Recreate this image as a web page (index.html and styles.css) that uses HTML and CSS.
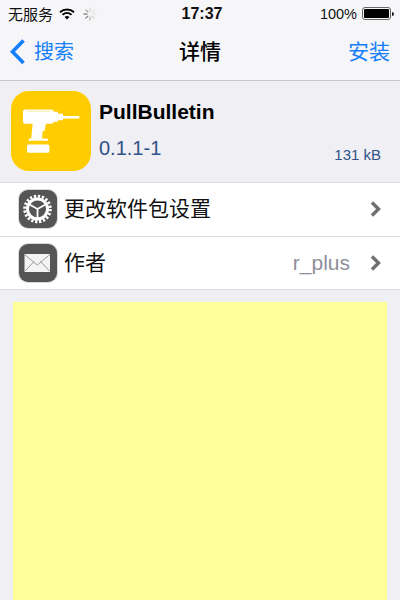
FILE: index.html
```html
<!DOCTYPE html>
<html lang="zh">
<head>
<meta charset="utf-8">
<title>详情</title>
<link rel="stylesheet" href="styles.css">
</head>
<body>
<div class="page">
  <header class="top">
    <div class="status">
      <div class="status-left">
        <span>无服务</span>
        <svg class="wifi" viewBox="0 0 16 12" width="16" height="12"><path d="M1 4.200C5 .6 11 .6 15 4.200" fill="none" stroke="#000" stroke-width="1.900"/><path d="M3.500 6.800C6.200 4.500 9.800 4.500 12.500 6.800" fill="none" stroke="#000" stroke-width="1.900"/><path d="M8 11.400 5.600 8.900C7 7.800 9 7.800 10.400 8.900Z" fill="#000"/></svg>
        <svg class="spinner" viewBox="0 0 14 14" width="14" height="14"><g stroke-width="1.100" stroke-linecap="round"><path d="M7 1v3" stroke="#ccc"/><path d="M11.200 2.800 9.100 4.900" stroke="#ddd"/><path d="M13 7h-3" stroke="#ddd"/><path d="M11.200 11.200 9.100 9.100" stroke="#ccc"/><path d="M7 13v-3" stroke="#aaa"/><path d="M2.800 11.200 4.900 9.100" stroke="#777"/><path d="M1 7h3" stroke="#555"/><path d="M2.800 2.800 4.900 4.900" stroke="#999"/></g></svg>
      </div>
      <div class="clock">17:37</div>
      <div class="status-right">
        <span>100%</span>
        <div class="battery"><div class="battery-fill"></div></div>
        <div class="battery-tip"></div>
      </div>
    </div>
    <nav class="nav">
      <div class="back">
        <svg viewBox="0 0 18 26" width="18" height="26"><path d="M14.500 1.500 3.500 12.800 14.500 24" fill="none" stroke="#147efb" stroke-width="3.600"/></svg>
        <span>搜索</span>
      </div>
      <div class="title">详情</div>
      <div class="action">安装</div>
    </nav>
  </header>

  <section class="package">
    <svg class="app-icon" viewBox="0 0 80 80" width="80" height="80">
      <rect width="80" height="80" rx="18" fill="#ffcc00"/>
      <path d="M14 18.400H40a3 3 0 0 1 3 2.300h4v2h5V25H68.300v2.400H52v1.900h-5v1.400h-4a3 3 0 0 1-3 2H35l-1.500 7-2 1-.5 6.700h5.500l.8 2.300H17.400l.8-2.300h2L21.700 32.700H14a2 2 0 0 1-2-2V20.400a2 2 0 0 1 2-2z" fill="#fff"/>
      <path d="M15 20.200H41" stroke="#ffe680" stroke-width=".7" fill="none"/>
      <rect x="16" y="53.400" width="22.400" height="8.300" rx="1.500" fill="#fff"/>
    </svg>
    <div class="package-info">
      <div class="package-name">PullBulletin</div>
      <div class="package-meta">
        <span class="version">0.1.1-1</span>
        <span class="size">131 kB</span>
      </div>
    </div>
  </section>

  <ul class="list">
    <li class="row">
      <span class="row-icon">
        <svg viewBox="0 0 38 38" width="38" height="38">
          <circle cx="18.500" cy="19" r="10" fill="none" stroke="#fff" stroke-width="3"/>
          <circle cx="18.500" cy="19" r="12.800" fill="none" stroke="#fff" stroke-width="3" stroke-dasharray="2.300 1.720"/>
          <path d="M18.500 19 10.500 14.500M18.500 19l8-4.500M18.500 19v9" stroke="#fff" stroke-width="1.800" fill="none"/>
        </svg>
      </span>
      <span class="row-label">更改软件包设置</span>
      <svg class="chevron" viewBox="0 0 14 18" width="14" height="18"><path d="M3 2.500 9.500 9 3 15.500" fill="none" stroke="#6f6f6f" stroke-width="3.400"/></svg>
    </li>
    <li class="row">
      <span class="row-icon">
        <svg viewBox="0 0 38 38" width="38" height="38">
          <rect x="5.500" y="10" width="25.500" height="18" fill="#f4f4f4"/>
          <path d="M5.500 10.500 18.200 21 31 10.500M5.500 27.500l9.500-10M31 27.500l-9.500-10" fill="none" stroke="#999" stroke-width="1"/>
        </svg>
      </span>
      <span class="row-label">作者</span>
      <span class="row-value">r_plus</span>
      <svg class="chevron" viewBox="0 0 14 18" width="14" height="18"><path d="M3 2.500 9.500 9 3 15.500" fill="none" stroke="#6f6f6f" stroke-width="3.400"/></svg>
    </li>
  </ul>

  <div class="content">
    <div class="note"></div>
  </div>
</div>
</body>
</html>
```

FILE: styles.css
```css
* { box-sizing: border-box; }
html, body { margin: 0; padding: 0; }
body {
  width: 400px;
  height: 600px;
  overflow: hidden;
  background: #efeff4;
  font-family: "Liberation Sans", "Noto Sans CJK SC", sans-serif;
  color: #000;
}
.page { width: 400px; height: 600px; display: flex; flex-direction: column; }
.top { height: 81px; background: #f6f6f8; border-bottom: 1px solid #c8c8cc; flex: none; }
.status {
  height: 27px;
  padding: 0 6px 0 8px;
  display: grid;
  grid-template-columns: 1fr auto 1fr;
  align-items: center;
  font-size: 15px;
  color: #111;
}
.status-left { display: flex; align-items: center; gap: 6px; }
.status-left .spinner { margin-left: 2px; }
.clock { font-weight: 700; font-size: 16px; margin-left: 2px; }
.status-right { display: flex; align-items: center; justify-content: flex-end; font-size: 14.500px; }
.battery { width: 29px; height: 13px; margin-left: 5px; border: 1px solid #666; border-radius: 3px; padding: 1px; }
.battery-fill { width: 100%; height: 100%; background: #000; border-radius: 1px; }
.battery-tip { width: 2px; height: 4px; background: #222; border-radius: 0 2px 2px 0; margin-left: 1px; }
.nav {
  height: 53px;
  padding: 0 10px 4px;
  display: grid;
  grid-template-columns: 1fr auto 1fr;
  align-items: center;
  line-height: 26px;
}
.back { display: flex; align-items: center; gap: 7px; color: #147efb; font-size: 20px; margin-left: -1px; }
.title { font-size: 21px; font-weight: 500; }
.action { color: #147efb; font-size: 21px; text-align: right; }
.package {
  height: 102px;
  flex: none;
  padding: 10px 19px 0 11px;
  display: flex;
  gap: 8px;
  border-bottom: 1px solid #dcdce0;
}
.app-icon { flex: none; }
.package-info { flex: 1; min-width: 0; }
.package-name { font-size: 21px; font-weight: 700; line-height: 24px; margin-top: 9px; }
.package-meta { display: flex; justify-content: space-between; align-items: flex-end; color: #2f5288; margin-top: 12px; }
.version { font-size: 20px; line-height: 24px; }
.size { font-size: 15px; line-height: 16px; position: relative; top: 3px; }
.list { list-style: none; margin: 0; padding: 0; background: #fff; flex: none; }
.row {
  height: 53.500px;
  padding: 0 17px 0 19px;
  display: flex;
  align-items: center;
  border-bottom: 1px solid #dcdce0;
}
.row-icon { width: 38px; height: 38px; background: #555; border-radius: 9px; flex: none; display: block; box-shadow: 0 0 0 1px #d8d8d8; }
.row-icon svg { display: block; }
.row-label { font-size: 21px; margin-left: 7px; flex: 1; color: #111; line-height: 28px; }
.row-value { font-size: 21px; color: #8e8e9a; margin-right: 19px; }
.chevron { flex: none; }
.content { flex: 1; padding: 12px 13px 0; overflow: hidden; }
.note { height: 298px; background: #ffff99; }
```
